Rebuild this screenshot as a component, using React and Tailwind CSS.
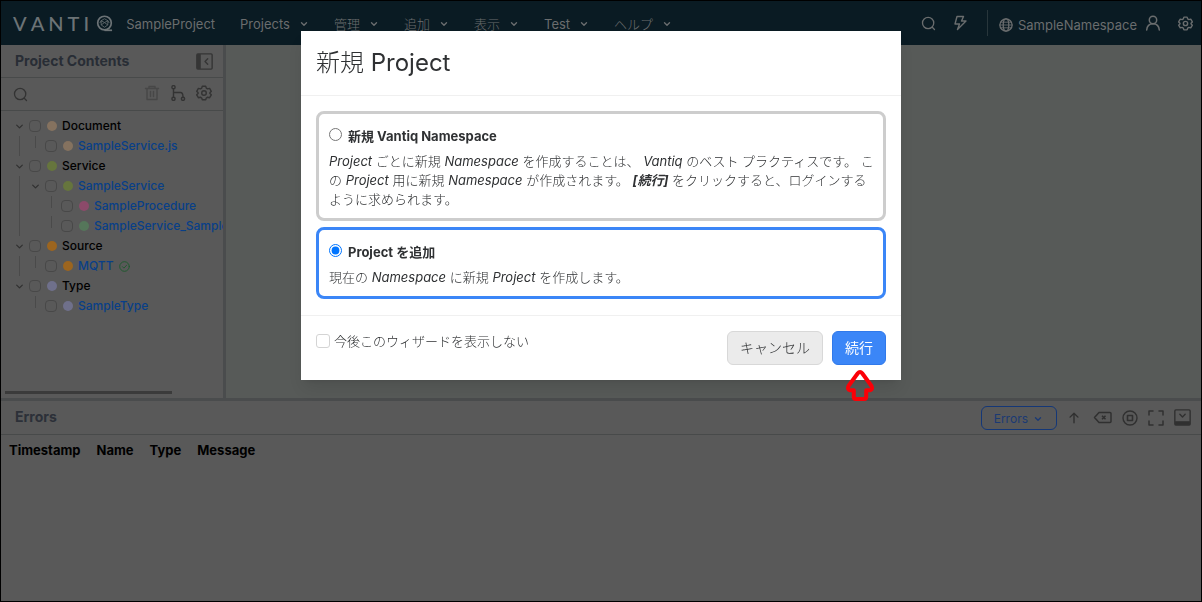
import { useState } from "react";

function Icon({ size = 16, sw = 1.4, className = "", children }) {
  return (
    <svg
      width={size}
      height={size}
      viewBox="0 0 16 16"
      fill="none"
      stroke="currentColor"
      strokeWidth={sw}
      strokeLinecap="round"
      strokeLinejoin="round"
      aria-hidden="true"
      className={`shrink-0 ${className}`}
    >
      {children}
    </svg>
  );
}

const SearchIcon = ({ size }) => (
  <Icon size={size}>
    <circle cx="7.6" cy="7.4" r="6" />
    <path d="M12 12l2.4 2.4" />
  </Icon>
);

const Chevron = ({ size = 8, sw = 2.8 }) => (
  <Icon size={size} sw={sw}>
    <path d="M3 5.5l5 5 5-5" />
  </Icon>
);

const GearIcon = ({ size, sw }) => (
  <Icon size={size} sw={sw}>
    <path d="M6.3 1.2h3.4l.6 1.900 1.300.8 2-.5 1.700 2.900-1.400 1.500v.6l1.400 1.400-1.700 2.900-2-.5-1.300.8-.6 1.800H6.300l-.6-1.800-1.300-.8-2 .5L.7 9.800l1.400-1.400v-.6L.7 6.300l1.700-2.900 2 .5 1.300-.8z" />
    <circle cx="8" cy="8" r="2.300" />
  </Icon>
);

function Logo() {
  return (
    <div className="flex items-center gap-[7px] text-[#6c7376]" aria-label="VANTIQ">
      <div className="flex gap-1 font-['Lato',sans-serif] text-[20px] leading-6 font-medium">
        <span>V</span>
        <span>A</span>
        <span>N</span>
        <span>T</span>
        <span>I</span>
      </div>
      <svg width="17" height="17" viewBox="0 0 18 18" fill="none" stroke="currentColor" aria-hidden="true">
        <circle cx="9" cy="8.500" r="7.200" strokeWidth="1.800" />
        <path d="M9 16.200h8" strokeWidth="1.800" />
        <path
          d="M9 4l3.500 2v4.500L9 13l-3.500-2.500V6zM5.500 6l3.500 2 3.500-2M9 8l3.500 2.500M9 8l-3.500 2.500M4 8.500L5.500 6M14 8.500L12.500 6"
          strokeWidth="0.800"
        />
      </svg>
    </div>
  );
}

const menus = ["Projects", "管理", "追加", "表示", "Test", "ヘルプ"];

function Header() {
  return (
    <header className="flex h-11 shrink-0 items-center bg-[#0a1b23] pl-3 pr-2 text-[13px] leading-5 text-[#6a6d6e]">
      <Logo />
      <span className="ml-[13px] pt-[2px]">SampleProject</span>
      <nav className="ml-[25px] flex items-center gap-[26px] pt-[2px]">
        {menus.map((m) => (
          <button
            key={m}
            type="button"
            className={`flex items-center gap-[10px] ${/[A-Z]/.test(m) ? "font-normal" : "font-light"}`}
          >
            {m}
            <Chevron />
          </button>
        ))}
      </nav>
      <div className="ml-auto flex items-center">
        <button type="button" aria-label="Search" className="mr-4">
          <SearchIcon size={15} />
        </button>
        <button type="button" aria-label="Quick actions" className="mr-[19px]">
          <Icon size={16} sw={1.400}>
            <path d="M5 1.500h6.500L9.500 6H14L5.500 14.500 7.500 9H3z" />
          </Icon>
        </button>
        <div className="h-[26px] w-px bg-[#28363b]" />
        <button type="button" className="ml-[11px] flex items-center gap-[5px] pt-1">
          <Icon size={14} sw={1.500}>
            <circle cx="8" cy="8" r="7" />
            <ellipse cx="8" cy="8" rx="3.200" ry="7" />
            <path d="M1 8h14M2 4.800h12M2 11.200h12" strokeWidth="1" />
          </Icon>
          SampleNamespace
        </button>
        <button type="button" aria-label="User" className="ml-2">
          <Icon size={16} sw={1.500}>
            <circle cx="8" cy="5" r="3.700" />
            <path d="M1.700 15c.3-4 2.900-6.300 6.300-6.300s6 2.300 6.300 6.300" />
          </Icon>
        </button>
        <button type="button" aria-label="Settings" className="ml-[17px]">
          <GearIcon size={15} sw={1.500} />
        </button>
      </div>
    </header>
  );
}

const tree = [
  { label: "Document", depth: 0, open: true, dot: "bg-[#85725f]" },
  { label: "SampleService.js", depth: 1, dot: "bg-[#85725f]", rail: true },
  { label: "Service", depth: 0, open: true, dot: "bg-[#66753d]" },
  { label: "SampleService", depth: 1, open: true, dot: "bg-[#66753d]", rail: true },
  { label: "SampleProcedure", depth: 2, dot: "bg-[#8c4a6a]", rail: true },
  { label: "SampleService_SampleProcedure", depth: 2, dot: "bg-[#55765a]", rail: true },
  { label: "Source", depth: 0, open: true, dot: "bg-[#9c651f]" },
  { label: "MQTT", depth: 1, dot: "bg-[#9c651f]", ok: true, rail: true },
  { label: "Type", depth: 0, open: true, dot: "bg-[#6f708b]" },
  { label: "SampleType", depth: 1, dot: "bg-[#6f708b]" },
];

function TreeRow({ label, depth, open, dot, ok, rail }) {
  return (
    <li className="flex h-5 items-center whitespace-nowrap">
      {Array.from({ length: depth }, (_, i) => (
        <span key={i} className="flex h-5 w-4 shrink-0 justify-center">
          {i === 0 && rail && <span className="h-5 w-px bg-[#4a4a4a]" />}
        </span>
      ))}
      {open ? (
        <button type="button" aria-label={`Toggle ${label}`} className="flex w-4 shrink-0 justify-center text-[#303030]">
          <Chevron size={9} sw={2.200} />
        </button>
      ) : (
        <span className="flex h-5 w-4 shrink-0 justify-center">
          <span className="h-3 w-px bg-[#4a4a4a]" />
        </span>
      )}
      <input
        type="checkbox"
        aria-label={label}
        className="ml-[2px] size-3 shrink-0 appearance-none rounded-[4px] border border-[#484848] checked:bg-[#0a346b]"
      />
      <span className={`ml-[6px] size-[10px] shrink-0 rounded-full ${dot}`} />
      {depth === 0 ? (
        <span className="ml-[5px] font-medium text-black">{label}</span>
      ) : (
        <a href="#" className="ml-[5px] font-medium text-[#083f88]">
          {label}
        </a>
      )}
      {ok && (
        <Icon size={11} className="ml-[6px] text-[#1f5a2e]">
          <circle cx="8" cy="8" r="7" />
          <path d="M5 8.200l2.200 2.200 4-4.400" />
        </Icon>
      )}
    </li>
  );
}

function Sidebar() {
  return (
    <aside className="flex w-[225px] shrink-0 flex-col overflow-hidden border-r-[3px] border-[#4a4c4d] bg-[#595959]">
      <div className="flex h-[33px] shrink-0 items-center justify-between border-b border-[#484a4a] pl-[14px] pr-[10px]">
        <h2 className="text-[14px] leading-5 font-bold text-[#282d35]">Project Contents</h2>
        <button type="button" aria-label="Collapse panel" className="text-[#353535]">
          <Icon size={17} sw={1.300}>
            <rect x="0.800" y="0.800" width="14.400" height="14.400" rx="1" />
            <path d="M1 1h3.500v14H1z" fill="currentColor" stroke="none" />
            <path d="M11 5.500L8.500 8l2.500 2.500" />
          </Icon>
        </button>
      </div>
      <div className="flex h-[33px] shrink-0 items-center border-b border-[#484a4a] pl-3 pr-[11px] text-[#333333]">
        <button type="button" aria-label="Search contents">
          <SearchIcon size={15} />
        </button>
        <div className="ml-auto flex items-center gap-[10px] pb-[2px]">
          <button type="button" aria-label="Delete" className="text-[#474747]">
            <Icon size={16}>
              <path d="M1.500 3.500h13M5 3.500v-2h6v2M3 3.500v11h10v-11M6.500 6.500v5M9.500 6.500v5" />
            </Icon>
          </button>
          <button type="button" aria-label="Show graph">
            <Icon size={16} sw={1.400}>
              <circle cx="3.500" cy="2.200" r="1.600" />
              <circle cx="3.500" cy="13.800" r="1.600" />
              <circle cx="13" cy="13.800" r="1.600" />
              <path d="M3.500 4v8M3.500 7.500h7Q13 7.500 13 12" />
            </Icon>
          </button>
          <button type="button" aria-label="Panel settings">
            <GearIcon size={16} sw={1.400} />
          </button>
        </div>
      </div>
      <ul className="overflow-hidden pl-[10px] pt-[5px] text-[12px] leading-5">
        {tree.map((row) => (
          <TreeRow key={row.label} {...row} />
        ))}
      </ul>
      <div className="mt-auto mb-1 ml-1 h-[3px] w-3/4 shrink-0 bg-[#3b3b3b]" />
    </aside>
  );
}

function ErrorsPanel() {
  return (
    <section className="flex min-h-0 flex-1 flex-col border-t-[3px] border-[#4a4c4d] bg-[#595959]">
      <div className="flex h-[34px] shrink-0 items-center border-b border-[#484a4a] pl-[14px] pr-[10px]">
        <h2 className="pb-[2px] text-[14px] leading-5 font-bold text-[#2c3038]">Errors</h2>
        <div className="ml-auto flex items-center text-[#303030]">
          <button
            type="button"
            className="mr-[10px] flex h-6 items-center gap-[6px] rounded-md border border-[#143777] pl-3 pr-[14px] pt-[2px] text-[12px] leading-5 text-[#1b3a74]"
          >
            Errors
            <Chevron />
          </button>
          <button type="button" aria-label="Scroll to top" className="mr-3">
            <Icon size={14} sw={1.600}>
              <path d="M8 13.500v-11M3.500 7L8 2.500 12.500 7" />
            </Icon>
          </button>
          <button type="button" aria-label="Clear" className="mr-[10px]">
            <svg width="19" height="13" viewBox="0 0 19 13" fill="none" stroke="currentColor" strokeWidth="1.500" aria-hidden="true">
              <path d="M6 1.500h11q1 0 1 1v8q0 1-1 1H6L1.500 6.500z" strokeLinejoin="round" />
              <path d="M9 4.800l3.500 3.500M12.500 4.800L9 8.300" />
            </svg>
          </button>
          <button type="button" aria-label="Stop" className="mr-[10px]">
            <Icon size={16} sw={1.400}>
              <circle cx="8" cy="8" r="7" />
              <rect x="5.500" y="5.500" width="5" height="5" strokeWidth="1.600" />
            </Icon>
          </button>
          <button type="button" aria-label="Full screen" className="mr-[10px]">
            <Icon size={16} sw={1.500}>
              <path d="M1 5V1h4M11 1h4v4M15 11v4h-4M5 15H1v-4" />
            </Icon>
          </button>
          <button type="button" aria-label="Collapse errors">
            <Icon size={17} sw={1.300}>
              <rect x="0.800" y="0.800" width="14.400" height="14.400" rx="1" />
              <path d="M1 11.500h14V15H1z" fill="currentColor" stroke="none" />
              <path d="M5.500 5L8 7.500 10.500 5" />
            </Icon>
          </button>
        </div>
      </div>
      <table className="mt-1 ml-2 self-start text-[13px] leading-[22px] text-black">
        <thead>
          <tr>
            <th className="pr-4 text-left font-bold">Timestamp</th>
            <th className="pr-4 text-left font-bold">Name</th>
            <th className="pr-4 text-left font-bold">Type</th>
            <th className="text-left font-bold">Message</th>
          </tr>
        </thead>
      </table>
    </section>
  );
}

function Choice({ value, checked, onChange, title, children }) {
  return (
    <div
      className={`rounded-lg border-[3px] pl-[10px] pr-[6px] pt-3 pb-[9px] ${checked ? "border-[#3b86f7]" : "border-[#cdcdcd]"}`}
    >
      <label className="flex items-center gap-[6px] text-[13px] leading-5 font-bold">
        <input
          type="radio"
          name="project-kind"
          value={value}
          checked={checked}
          onChange={() => onChange(value)}
          className="mb-[3px] size-[13px] shrink-0"
        />
        {title}
      </label>
      <p className="mt-[6px] text-[13px] leading-[19px] font-light">{children}</p>
    </div>
  );
}

const Term = ({ children }) => <em className="font-normal italic">{children}</em>;

function Wizard() {
  const [kind, setKind] = useState("project");
  return (
    <div className="fixed inset-0 flex items-start justify-center pt-[31px]">
      <div role="dialog" aria-labelledby="wizard-title" className="w-[600px] bg-white text-[#2f3133] shadow-lg">
        <div className="flex h-[65px] items-center border-b border-[#f0f0f0] px-[15px]">
          <h1 id="wizard-title" className="text-[24px] leading-8 font-light">
            新規 <span className="font-normal">Project</span>
          </h1>
        </div>
        <div className="flex flex-col gap-[6px] px-[15px] pt-[15px] pb-4">
          <Choice value="namespace" checked={kind === "namespace"} onChange={setKind} title="新規 Vantiq Namespace">
            <Term>Project</Term> ごとに新規 <Term>Namespace</Term> を作成することは、 <Term>Vantiq</Term> のベスト
            プラクティスです。 この <Term>Project</Term> 用に新規 <Term>Namespace</Term> が作成されます。{" "}
            <strong className="font-bold italic">[続行]</strong> をクリックすると、ログインするように求められます。
          </Choice>
          <Choice value="project" checked={kind === "project"} onChange={setKind} title="Project を追加">
            現在の <Term>Namespace</Term> に新規 <Term>Project</Term> を作成します。
          </Choice>
        </div>
        <div className="flex items-start border-t border-[#f0f0f0] p-[15px]">
          <label className="flex items-center gap-1 text-[13px] leading-5 font-light">
            <input
              type="checkbox"
              className="size-[14px] appearance-none rounded-[3px] border border-[#d4d4d4] checked:bg-[#3b86f7]"
            />
            今後このウィザードを表示しない
          </label>
          <div className="ml-auto flex gap-[9px] text-[14px] leading-5">
            <button type="button" className="h-[34px] rounded-md border border-[#d8d8d8] bg-[#ebebeb] px-3 font-light">
              キャンセル
            </button>
            <div className="relative">
              <button type="button" className="h-[34px] rounded-md border border-[#3079ea] bg-[#3b86f7] px-3 text-white">
                続行
              </button>
              <svg
                width="30"
                height="34"
                viewBox="0 0 30 34"
                fill="none"
                stroke="#fb0007"
                strokeWidth="4"
                strokeLinejoin="round"
                aria-hidden="true"
                className="absolute top-full left-[13px] mt-1"
              >
                <path d="M15 3q1.200 0 2.200 1.200L26.500 17q1.500 3.500-1.500 4.200H21.200V28q0 2-2 2h-8.400q-2 0-2-2V21.200H5Q2 20.500 3.500 17L12.800 4.200Q13.800 3 15 3z" />
              </svg>
            </div>
          </div>
        </div>
      </div>
    </div>
  );
}

export default function App() {
  return (
    <div className="flex h-screen flex-col border border-black bg-[#595959] font-['Inter','Noto_Sans_CJK_JP',sans-serif]">
      <Header />
      <main className="flex min-h-0 flex-[353] basis-0">
        <Sidebar />
        <div className="flex-1 bg-[#575a58]" />
      </main>
      <div className="flex min-h-0 flex-[203] basis-0 flex-col">
        <ErrorsPanel />
      </div>
      <Wizard />
    </div>
  );
}
